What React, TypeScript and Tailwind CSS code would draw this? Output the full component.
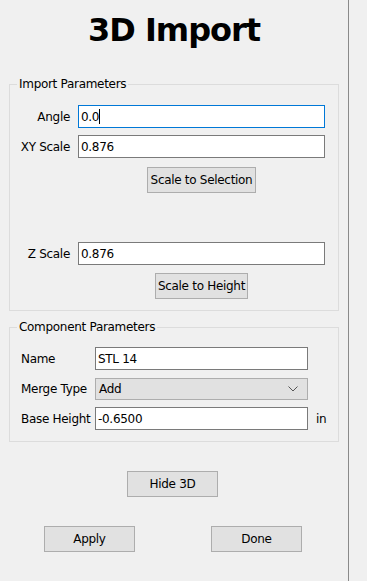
import type { ReactNode } from "react";

function Field({ children, focused = false, width }: { children: ReactNode; focused?: boolean; width: string }) {
  return (
    <div
      className={`${width} h-[23px] flex items-center bg-white pl-[2px] border ${
        focused ? "border-[#0078d7]" : "border-[#7a7a7a]"
      }`}
    >
      {children}
    </div>
  );
}

function Btn({ label, width }: { label: string; width: string }) {
  return (
    <div className={`${width} h-[26px] flex items-center justify-center bg-[#e1e1e1] border border-[#adadad] text-black`}>
      {label}
    </div>
  );
}

function GroupBox({ title, children, className = "" }: { title: string; children: ReactNode; className?: string }) {
  return (
    <div className={`mx-[9px] border border-[#dcdcdc] ${className}`}>
      <span className="block w-fit -mt-[9px] ml-[7px] px-[2px] bg-[#f0f0f0] leading-[16px]">{title}</span>
      {children}
    </div>
  );
}

export default function App() {
  return (
    <div className="w-[367px] h-[581px] flex bg-[#f0f0f0] text-black font-['DejaVu_Sans',sans-serif] text-[12px] tracking-[-0.3px] overflow-hidden">
      <div className="w-[348px] shrink-0">
        <h1 className="pt-[10px] text-center text-[32px] leading-[40px] font-bold tracking-[-1px]">3D Import</h1>

        <GroupBox title="Import Parameters" className="mt-[34px] pb-[11px]">
          <div className="mt-[13px] flex items-center gap-[8px]">
            <span className="w-[60px] text-right">Angle</span>
            <Field width="w-[247px]" focused>
              <span>0.0</span>
              <span className="w-px h-[15px] bg-black" />
            </Field>
          </div>
          <div className="mt-[7px] flex items-center gap-[8px]">
            <span className="w-[60px] text-right">XY Scale</span>
            <Field width="w-[247px]">0.876</Field>
          </div>
          <div className="mt-[9px] ml-[68px] w-[247px] flex justify-center">
            <Btn label="Scale to Selection" width="w-[109px]" />
          </div>

          <div className="mt-[49px] flex items-center gap-[8px]">
            <span className="w-[60px] text-right">Z Scale</span>
            <Field width="w-[247px]">0.876</Field>
          </div>
          <div className="mt-[8px] ml-[68px] w-[247px] flex justify-center">
            <Btn label="Scale to Height" width="w-[93px]" />
          </div>
        </GroupBox>

        <GroupBox title="Component Parameters" className="mt-[16px] pb-[11px]">
          <div className="mt-[12px] pl-[11px] flex items-center">
            <span className="w-[74px]">Name</span>
            <Field width="w-[213px]">STL 14</Field>
          </div>
          <div className="mt-[8px] pl-[11px] flex items-center">
            <span className="w-[74px]">Merge Type</span>
            <div className="w-[213px] h-[22px] flex items-center justify-between bg-[#e1e1e1] border border-[#adadad] pl-[3px] pr-[9px]">
              <span>Add</span>
              <svg width="10" height="6" viewBox="0 0 10 6" fill="none">
                <path d="M0.5 0.5 L5 5 L9.5 0.5" stroke="#555" strokeWidth="1" />
              </svg>
            </div>
          </div>
          <div className="mt-[7px] pl-[11px] flex items-center">
            <span className="w-[74px]">Base Height</span>
            <Field width="w-[213px]">-0.6500</Field>
            <span className="ml-[8px]">in</span>
          </div>
        </GroupBox>

        <div className="mt-[29px] ml-[127px]">
          <Btn label="Hide 3D" width="w-[91px]" />
        </div>

        <div className="mt-[29px] ml-[44px] flex gap-[76px]">
          <Btn label="Apply" width="w-[91px]" />
          <Btn label="Done" width="w-[91px]" />
        </div>
      </div>
      <div className="w-px shrink-0 bg-[#8a8a8a]" />
      <div className="flex-1" />
    </div>
  );
}
